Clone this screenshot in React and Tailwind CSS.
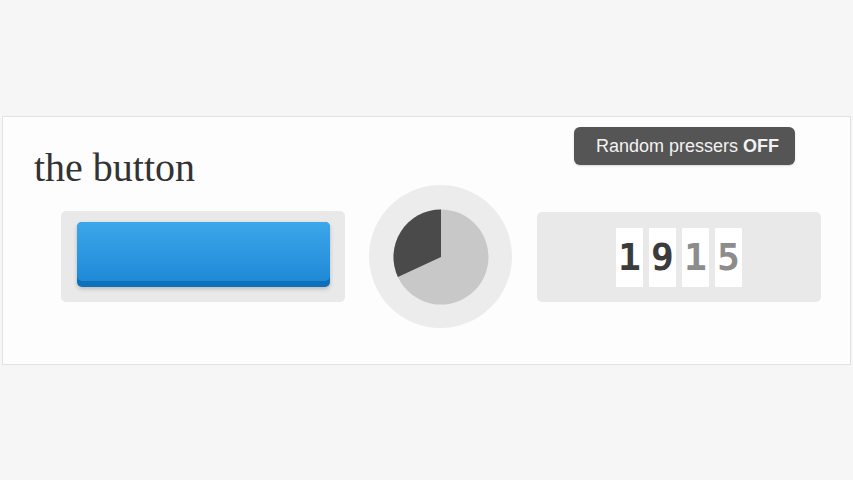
export default function App() {
  return (
    <div className="min-h-screen w-full bg-[#f6f6f6] pt-[116px] pl-[2px]">
      <div className="w-[849px] h-[249px] border border-[#e2e2e2] bg-[#fdfdfd] flex flex-col">
        {/* Header */}
        <div className="h-[69px] flex justify-between items-start pt-[10px] pl-[31px] pr-[55px]">
          <h1 className="mt-[21px] text-[40px] leading-none text-[#333] font-['Liberation_Serif',serif]">
            the button
          </h1>
          <div className="h-[38px] w-[221px] rounded-[6px] bg-[#555555] shadow-[0_1px_2px_rgba(0,0,0,0.15)] flex items-center pl-[22px] text-[18px] text-[#f2f2f2] font-['Liberation_Sans',Arial,sans-serif]">
            Random pressers&nbsp;<span className="font-bold">OFF</span>
          </div>
        </div>

        {/* Body */}
        <div className="flex items-center pl-[58px] -mt-[1px]">
          {/* Button tray */}
          <div className="w-[284px] h-[91px] rounded-[5px] bg-[#e9e9e9] pt-[11px] pl-[16px]">
            <div className="w-[253px] h-[65px] rounded-[5px] bg-[#0e6fbb] shadow-[0_2px_4px_rgba(0,0,0,0.2)]">
              <div className="h-[59px] rounded-[5px] bg-gradient-to-b from-[#3ca7ea] to-[#1f89d7]" />
            </div>
          </div>

          {/* Timer */}
          <div className="ml-[24px] w-[143px] h-[143px] rounded-full bg-[#ececec] flex items-center justify-center">
            <svg width="96" height="96" viewBox="0 0 96 96">
              <circle cx="48" cy="48" r="47.5" fill="#c8c8c8" />
              <path d="M48 48 L48 0.5 A47.5 47.5 0 0 0 4.9 68 Z" fill="#4a4a4a" />
            </svg>
          </div>

          {/* Counter */}
          <div className="ml-[25px] w-[284px] h-[90px] rounded-[5px] bg-[#e9e9e9] flex items-center justify-center gap-[6px] pt-[1px] font-['DejaVu_Sans_Mono',monospace] font-bold text-[38px]">
            {['1', '9', '1', '5'].map((d, i) => (
              <div
                key={i}
                className={
                  'w-[27px] h-[59px] bg-white flex items-center justify-center ' +
                  (i < 2 ? 'text-[#3b3b3b]' : 'text-[#8c8c8c]')
                }
              >
                {d}
              </div>
            ))}
          </div>
        </div>
      </div>
    </div>
  );
}
